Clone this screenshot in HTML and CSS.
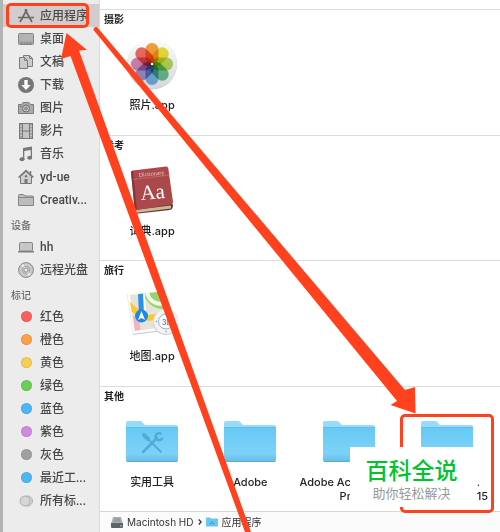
FILE: index.html
```html
<!DOCTYPE html>
<html lang="zh-CN">
<head>
<meta charset="utf-8">
<title>应用程序</title>
<link rel="stylesheet" href="styles.css">
</head>
<body>
<svg class="defs" width="0" height="0" aria-hidden="true">
  <defs>
    <linearGradient id="folderFace" x1="0" y1="0" x2="0" y2="1">
      <stop offset="0" stop-color="#66c9f4"/><stop offset=".75" stop-color="#7dd2f8"/><stop offset="1" stop-color="#66bce3"/>
    </linearGradient>
    <linearGradient id="disc" x1="0" y1="0" x2="0" y2="1">
      <stop offset="0" stop-color="#fbfcfd"/><stop offset="1" stop-color="#d5d6d9"/>
    </linearGradient>
    <symbol id="folder" viewBox="0 0 52 52">
      <path d="M0 8q0-2 2-2h12q2 0 3 2l2 2h31q2 0 2 2v10H0z" fill="#97dcfd"/>
      <path d="M0 13q0-1 1-1h50q1 0 1 1v32q0 2-2 2H2q-2 0-2-2z" fill="url(#folderFace)"/>
      <path d="M0 12.500h52" stroke="#59b9e4" stroke-width=".7"/>
      <path d="M1 46.500h50" stroke="#58abd1" stroke-width="1"/>
    </symbol>
  </defs>
</svg>
<div class="window">
  <nav class="sidebar">
    <ul>
      <li><a class="row selected" href="#apps"><svg viewBox="0 0 16 16"><g fill="none" stroke="#696767" stroke-width="1.700"><path d="M7 1.500l7 12.500M9 1.500L2 14"/><path d="M0 9.500h3.500M5 9.500h6M12.500 9.500H16"/></g></svg>应用程序</a></li>
      <li><a class="row" href="#desktop"><svg viewBox="0 0 16 16"><rect x=".5" y="2.500" width="15" height="11" rx="1" fill="#b3b3b3" stroke="#858585"/><path d="M1 11h14" stroke="#959595"/><path d="M2.500 12.200h11" stroke="#6d6d6d" stroke-dasharray="2 1"/></svg>桌面</a></li>
      <li><a class="row" href="#docs"><svg viewBox="0 0 16 16"><g fill="#ccc" stroke="#7c7c7c"><path d="M5.500 1.500h6l3 3v8h-9z"/><path d="M11.500 1.500v3h3" fill="none"/><path d="M1.500 3.500h5l3 3v8h-8z"/><path d="M6.500 3.500v3h3" fill="none"/></g></svg>文稿</a></li>
      <li><a class="row" href="#downloads"><svg viewBox="0 0 16 16"><circle cx="8" cy="8" r="8" fill="#777"/><path d="M6.300 3h3.400v5h3L8 13 3.300 8h3z" fill="#fff"/></svg>下载</a></li>
      <li><a class="row" href="#pictures"><svg viewBox="0 0 16 16"><path d="M.5 4.500h3l1.500-2h6l1.500 2h3v9H.5z" fill="#aaa" stroke="#7b7b7b"/><circle cx="8" cy="8.500" r="3.500" fill="#c4c4c4" stroke="#6f6f6f"/><circle cx="8" cy="8.500" r="1.500" fill="#999" stroke="#777" stroke-width=".6"/><path d="M2 6.500h1.500" stroke="#666"/></svg>图片</a></li>
      <li><a class="row" href="#movies"><svg viewBox="0 0 16 16"><rect x="1.500" y=".5" width="13" height="15" fill="#c5c5c5" stroke="#777"/><path d="M4.500 1v14M11.500 1v14M4.500 8h7" stroke="#777" fill="none"/><path d="M3 1v14M13 1v14" stroke="#777" stroke-dasharray="1.500 1.500"/></svg>影片</a></li>
      <li><a class="row" href="#music"><svg viewBox="0 0 16 16"><path d="M5 2l9-1.500v11h-1.300V4L6.300 5v8.500H5z" fill="#777"/><ellipse cx="4" cy="13.300" rx="2.500" ry="2" fill="#777"/><ellipse cx="11.700" cy="11.800" rx="2.500" ry="2" fill="#777"/></svg>音乐</a></li>
      <li><a class="row" href="#home"><svg viewBox="0 0 16 16"><path d="M2.500 7.500L8 2.500l5.500 5v7h-11z" fill="#d0d0d0" stroke="#777"/><path d="M.5 8.500L8 1.500l7.500 7M12.500 2v3" fill="none" stroke="#777" stroke-width="1.500"/><path d="M6.500 10h3v4.500h-3z" fill="#777"/><circle cx="8" cy="7.300" r="1.200" fill="#777"/></svg>yd-ue</a></li>
      <li><a class="row" href="#creative"><svg viewBox="0 0 16 16"><path d="M.5 3.500q0-1 1-1h4l1.500 1.500h7.500q1 0 1 1v8.500H.5z" fill="#bdbdbd" stroke="#858585"/><path d="M1 5.500h14" stroke="#8a8a8a"/></svg>Creativ...</a></li>
    </ul>
    <h2>设备</h2>
    <ul>
      <li><a class="row" href="#hh"><svg viewBox="0 0 16 16"><rect x="1.500" y="3.500" width="13" height="8.500" rx="1" fill="#c7c7c7" stroke="#868686"/><path d="M0 12.800h16" stroke="#747474" stroke-width="1.300"/></svg>hh</a></li>
      <li><a class="row" href="#optical"><svg viewBox="0 0 16 16"><circle cx="8" cy="8" r="7.400" fill="#c9c9c9" stroke="#888"/><path d="M8 8L3 3.500 5.500 2zM8 8l5 4.500-2.500 1.500z" fill="#eee"/><circle cx="8" cy="8" r="3.700" fill="none" stroke="#999" stroke-width=".7"/><circle cx="8" cy="8" r="2" fill="#eee" stroke="#888" stroke-width=".8"/></svg>远程光盘</a></li>
    </ul>
    <h2>标记</h2>
    <ul>
      <li><a class="row" href="#red"><i class="dot red"></i>红色</a></li>
      <li><a class="row" href="#orange"><i class="dot orange"></i>橙色</a></li>
      <li><a class="row" href="#yellow"><i class="dot yellow"></i>黄色</a></li>
      <li><a class="row" href="#green"><i class="dot green"></i>绿色</a></li>
      <li><a class="row" href="#blue"><i class="dot blue"></i>蓝色</a></li>
      <li><a class="row" href="#purple"><i class="dot purple"></i>紫色</a></li>
      <li><a class="row" href="#gray"><i class="dot gray"></i>灰色</a></li>
      <li><a class="row" href="#recent"><i class="dot blue"></i>最近工...</a></li>
      <li><a class="row" href="#all"><svg viewBox="0 0 16 16"><g fill="#d6d6d6" stroke="#b0b0b0"><circle cx="9.500" cy="8" r="5"/><circle cx="7" cy="8" r="5"/></g></svg>所有标...</a></li>
    </ul>
  </nav>

  <main class="content">
    <div class="sections">
      <section>
        <h3>摄影</h3>
        <div class="grid">
          <a class="item" href="#photos">
            <svg viewBox="0 0 52 52"><circle cx="26" cy="26.500" r="25" fill="#c8cacd"/><circle cx="26" cy="26" r="25" fill="url(#disc)"/>
              <g class="petals">
                <rect x="19.500" y="5" width="13" height="21" rx="6.500" fill="#f9a13c"/>
                <rect x="19.500" y="5" width="13" height="21" rx="6.500" fill="#eee038" transform="rotate(45 26 26)"/>
                <rect x="19.500" y="5" width="13" height="21" rx="6.500" fill="#b8d85c" transform="rotate(90 26 26)"/>
                <rect x="19.500" y="5" width="13" height="21" rx="6.500" fill="#71c393" transform="rotate(135 26 26)"/>
                <rect x="19.500" y="5" width="13" height="21" rx="6.500" fill="#76b5e6" transform="rotate(180 26 26)"/>
                <rect x="19.500" y="5" width="13" height="21" rx="6.500" fill="#a292cb" transform="rotate(225 26 26)"/>
                <rect x="19.500" y="5" width="13" height="21" rx="6.500" fill="#d688b5" transform="rotate(270 26 26)"/>
                <rect x="19.500" y="5" width="13" height="21" rx="6.500" fill="#f26c60" transform="rotate(315 26 26)"/>
              </g><circle cx="26" cy="26" r="1.300" fill="#fff"/></svg>
            <span>照片.app</span></a>
        </div>
      </section>
      <section>
        <h3>参考</h3>
        <div class="grid">
          <a class="item" href="#dictionary">
            <svg viewBox="0 0 52 52"><path d="M6 44l2 6 36-4q3-1 3-5l-2-3z" fill="#62382f"/><path d="M8 46l37-4.500v3L9 49z" fill="#c9b898"/><path d="M5 8q0-1 2-1.500l33-4q2 0 2.300 2L47 38q0 2-2 2.500L11 46q-2 0-2.500-2z" fill="#aa484c"/><path d="M5 8l3.500 36q.5 2 2.500 2L7 6.500Q5 7 5 8z" fill="#8d3237"/><path d="M7 15.500L43.500 11" stroke="#c67376" stroke-width=".7"/>
              <text x="13" y="13" class="book-title" transform="rotate(-6 13 13)">Dictionary</text><text x="15" y="36" class="book-letters" transform="rotate(-5 15 36)">Aa</text></svg>
            <span>词典.app</span></a>
        </div>
      </section>
      <section>
        <h3>旅行</h3>
        <div class="grid">
          <a class="item" href="#maps">
            <svg viewBox="0 0 52 52"><path d="M1 5l36-4 8 40-38 5z" fill="#c9c9c9"/><path d="M1 4l36-4 7.500 40L7 45z" fill="#fbfbf8"/><path d="M4 6l31-3.500 6.500 35L9 42z" fill="#e7e3d9"/><path d="M16 5l19-2.500L38 20q-9 0-14-5T16 5z" fill="#91d76c"/><path d="M21 4q3 11 16 11" stroke="#f8f5e9" stroke-width="4" fill="none"/><path d="M4 13l7 6 11 7 18-3 .8 5-18 4-17-9z" fill="#fbc833"/><path d="M6.500 26l7 5 1 10-5.500.7z" fill="#efb3c7"/><path d="M12 5.200l5-.6 1 23h-5z" fill="#2b91e7"/><path d="M18 4.500l1.500 20" stroke="#fff" stroke-width="1.500"/><circle cx="15.500" cy="27" r="6.500" fill="#198be5"/><path d="M15.500 22l3.500 9-3.500-2-3.500 2z" fill="#fff"/>
              <circle cx="40" cy="33" r="13" fill="#cdd0d4"/><circle cx="40" cy="32.500" r="12.300" fill="#f1f3f5"/><circle cx="40" cy="32.500" r="7.500" fill="#fff" stroke="#8db5c8"/><g fill="#888"><circle cx="30.500" cy="32.500" r=".7"/><circle cx="40" cy="42.500" r=".7"/></g><text x="36" y="35.500" class="compass">3D</text></svg>
            <span>地图.app</span></a>
        </div>
      </section>
      <section>
        <h3>其他</h3>
        <div class="grid">
          <a class="item" href="#utilities"><svg viewBox="0 0 52 52"><use href="#folder"/><g stroke="#52abd6" fill="none" stroke-linecap="round"><path d="M18 20l4 4" stroke-width="4"/><path d="M22 24l13 13" stroke-width="1.800"/><path d="M17 37l14-14" stroke-width="2.500"/><path d="M34.500 18.500a3.500 3.500 0 1 0 1.500 5" stroke-width="2.500"/></g></svg><span>实用工具</span></a>
          <a class="item" href="#adobe"><svg viewBox="0 0 52 52"><use href="#folder"/></svg><span>Adobe</span></a>
          <a class="item" href="#acrobat"><svg viewBox="0 0 52 52"><use href="#folder"/></svg><span class="cut cut-left">Adobe Ac<br>Pr</span></a>
          <a class="item" href="#release"><svg viewBox="0 0 52 52"><use href="#folder"/></svg><span class="cut cut-right">.<br>15</span></a>
        </div>
      </section>
    </div>
    <footer class="path">
      <svg class="drive" viewBox="0 0 12 12"><path d="M2 1h8l2 7H0z" fill="#aab0b2"/><path d="M0 7h12v4q0 1-1 1H1q-1 0-1-1z" fill="#5e6568"/><path d="M3 3h6M3 5h6" stroke="#7c8588" stroke-width=".8"/><circle cx="10" cy="10" r=".7" fill="#b7e6cf"/></svg>
      <span>Macintosh HD</span>
      <svg class="chevron" viewBox="0 0 4 8"><path d="M.7 1.500L3.200 4 .7 6.500" fill="none" stroke="#333" stroke-width="1.300"/></svg>
      <svg class="mini" viewBox="0 0 12 12"><path d="M0 2.500q0-1 1-1h3l1 1h6q1 0 1 1v7H0z" fill="#68c6f0"/><path d="M4 9l2-4 2 4M3.500 7.500h5" fill="none" stroke="#43a1ca" stroke-width=".7"/></svg>
      <span>应用程序</span>
    </footer>
  </main>

  <div class="mark mark-sidebar"></div>
  <div class="mark mark-folder"></div>
  <svg class="arrows" viewBox="0 0 500 532" aria-hidden="true"><g fill="#ff421d">
    <path d="M66.500 33L87 50l-8 .5L251 532h-6L70.500 56l-9.500 3z"/>
    <path d="M93.500 30q0-3.500 3.500-3L405 390l10-3 .5 26.500-25-8.500 6.500-4z"/>
  </g></svg>
  <div class="caption"><strong>百科全说</strong><span>助你轻松解决</span></div>
</div>
</body>
</html>
```
FILE: styles.css
```css
* { box-sizing: border-box; }
body {
  margin: 0;
  background: #fff;
  color: #222;
  font-family: Inter, "Noto Sans CJK SC", sans-serif;
}
ul { margin: 0; padding: 0; list-style: none; }
a { color: inherit; text-decoration: none; }
h2, h3 { margin: 0; }
svg { display: block; flex: none; }
.defs { position: absolute; }

.window {
  position: relative;
  display: flex;
  min-height: 100vh;
  overflow: hidden;
}

.sidebar {
  flex: none;
  width: 100px;
  padding-top: 4px;
  background: #ececec;
  border-left: 3px solid #b3b3b3;
  border-right: 1px solid #dadada;
  font-family: Roboto, "Noto Sans CJK SC", sans-serif;
}
.sidebar h2 {
  height: 24px;
  padding: 6px 0 0 8px;
  font-size: 10px;
  line-height: 18px;
  font-weight: 500;
  color: #6c6c6c;
}
.row {
  display: flex;
  align-items: center;
  gap: 6px;
  height: 23px;
  padding-left: 15px;
  font-size: 12px;
  line-height: 24px;
  font-weight: 500;
  white-space: nowrap;
  color: #484848;
}
.row svg { width: 16px; height: 16px; }
.selected { background: #d3cccc; }
.dot {
  width: 11px;
  height: 11px;
  margin: 0 2px 0 3px;
  border: 1px solid rgba(0, 0, 0, .08);
  border-radius: 50%;
}
.red { background: #fc605c; }
.orange { background: #f9a24a; }
.yellow { background: #f6ce52; }
.green { background: #6cce56; }
.blue { background: #4bb7f5; }
.purple { background: #d088e2; }
.gray { background: #a0a0a2; }

.content {
  flex: 1;
  min-width: 0;
  display: flex;
  flex-direction: column;
  padding-top: 9px;
}
.sections {
  flex: 1;
  display: grid;
  grid-template-rows: repeat(4, 1fr);
}
section { border-top: 1px solid #dcdcdc; }
section h3 {
  padding-left: 4px;
  font-size: 10px;
  line-height: 18px;
  font-weight: 700;
}
.grid {
  display: grid;
  grid-template-columns: repeat(4, 1fr);
  padding: 10px 4px 0 3px;
}
.item {
  display: flex;
  flex-direction: column;
  align-items: center;
  gap: 8px;
  font-size: 11px;
  line-height: 14px;
  font-weight: 500;
  text-align: center;
  white-space: nowrap;
}
.item svg { width: 52px; height: 52px; }
.cut { text-align: right; }
.cut-left { align-self: flex-start; }
.cut-right { align-self: flex-end; padding-right: 8px; text-align: left; }
.petals rect { mix-blend-mode: multiply; }
.book-title { font: 6px "Liberation Serif", serif; fill: #ecc7c4; }
.book-letters { font: 21px "Liberation Serif", serif; fill: #fff; }
.compass { font: 7px Inter, sans-serif; fill: #555; }

.path {
  display: flex;
  align-items: center;
  gap: 4px;
  height: 21px;
  padding-left: 11px;
  border-top: 1px solid #d5d5d5;
  background: #fbfbfb;
  font-size: 10px;
  line-height: 20px;
  color: #333;
}
.drive, .mini { width: 12px; height: 12px; }
.chevron { width: 4px; height: 8px; }

.mark {
  position: absolute;
  border: 3px solid #ff421d;
  border-radius: 5px;
}
.mark-sidebar { left: 6px; top: 3px; width: 83px; height: 25px; }
.mark-folder { left: 400px; top: 414px; width: 94px; height: 99px; }
.arrows {
  position: absolute;
  left: 0;
  top: 0;
  width: 500px;
  height: 532px;
  pointer-events: none;
}
.caption {
  position: absolute;
  left: 350px;
  top: 447px;
  width: 123px;
  height: 60px;
  padding-top: 10px;
  background: #fff;
  display: flex;
  flex-direction: column;
  align-items: center;
  white-space: nowrap;
}
.caption strong {
  font-size: 23px;
  line-height: 28px;
  font-weight: 500;
  color: #00c42c;
}
.caption span { font-size: 13px; line-height: 16px; color: #999; }
```
